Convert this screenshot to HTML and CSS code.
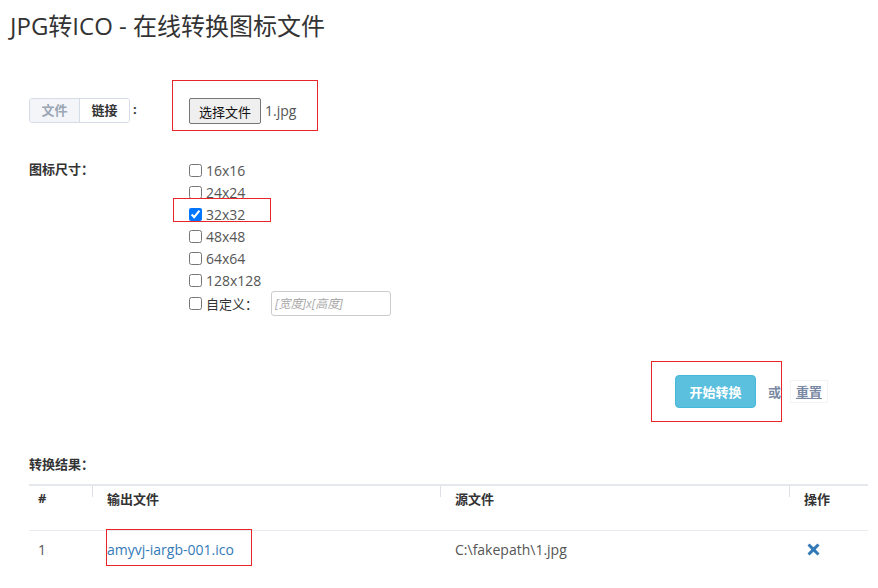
FILE: index.html
```html
<!DOCTYPE html>
<html lang="zh-CN">
  <head>
    <meta charset="UTF-8" />
    <meta name="viewport" content="width=device-width, initial-scale=1.0" />
    <title>JPG转ICO - 在线转换图标文件</title>
    <link rel="stylesheet" href="styles.css">
  </head>
  <body>
    <h1 class="title">JPG转ICO - 在线转换图标文件</h1>

    <div class="form">
      <div class="row source-row">
        <div class="row-label">
          <div class="tabs">
            <span class="tab">文件</span>
            <span class="tab active">链接</span>
          </div>
          <span class="colon">:</span>
        </div>
        <div class="mark file-box">
          <button class="file-btn">选择文件</button>
          <span class="file-name">1.jpg</span>
        </div>
      </div>

      <div class="row size-row">
        <div class="row-label"><b>图标尺寸：</b></div>
        <div class="sizes">
          <label class="size"><input type="checkbox" /> 16x16</label>
          <label class="size"><input type="checkbox" /> 24x24</label>
          <label class="size picked"><input type="checkbox" checked /> 32x32<span class="mark picked-mark"></span></label>
          <label class="size"><input type="checkbox" /> 48x48</label>
          <label class="size"><input type="checkbox" /> 64x64</label>
          <label class="size"><input type="checkbox" /> 128x128</label>
          <label class="size custom"><input type="checkbox" /> 自定义：<input type="text" class="custom-input" placeholder="[宽度]x[高度]" /></label>
        </div>
      </div>

      <div class="actions">
        <div class="go-wrap">
          <button class="go-btn">开始转换</button>
          <span class="mark go-mark"></span>
        </div>
        <span class="or">或</span>
        <a href="#" class="reset">重置</a>
      </div>
    </div>

    <div class="results">
      <b class="results-title">转换结果：</b>
      <table class="result-table">
        <thead>
          <tr>
            <th class="col-num">#</th>
            <th class="col-out">输出文件</th>
            <th class="col-src">源文件</th>
            <th class="col-op">操作</th>
          </tr>
        </thead>
        <tbody>
          <tr>
            <td class="col-num">1</td>
            <td class="col-out"><a href="#" class="out-link">amyvj-iargb-001.ico<span class="mark link-mark"></span></a></td>
            <td class="col-src">C:\fakepath\1.jpg</td>
            <td class="col-op">
              <svg class="del" width="13" height="13" viewBox="0 0 13 13">
                <path d="M2.5 0.5 L6.5 4.3 L10.5 0.5 L12.5 2.5 L8.7 6.5 L12.5 10.5 L10.5 12.5 L6.5 8.7 L2.5 12.5 L0.5 10.5 L4.3 6.5 L0.5 2.5 Z" fill="#337ab7" />
              </svg>
            </td>
          </tr>
        </tbody>
      </table>
    </div>
  </body>
</html>
```

FILE: styles.css
```css
body {
  margin: 0;
  font-family: "Open Sans", "Noto Sans CJK SC", sans-serif;
  font-size: 14px;
  color: #555;
  background: #fff;
}

.title {
  margin: 10px 0 0 10px;
  font-size: 24px;
  line-height: 32px;
  font-weight: normal;
  color: #333;
}

.form {
  padding-left: 29px;
}

.row {
  display: flex;
}

.row-label {
  width: 143px;
  flex-shrink: 0;
  display: flex;
  align-items: flex-start;
  font-size: 13px;
  color: #333;
}

/* red outlines drawn around the key controls */
.mark {
  border: 1px solid #e8262a;
}

.source-row {
  margin-top: 38px;
}

.source-row .row-label {
  padding-top: 18px;
}

.tabs {
  display: flex;
  border: 1px solid #d6dce5;
  border-radius: 3px;
  overflow: hidden;
}

.tab {
  width: 49px;
  height: 23px;
  line-height: 23px;
  text-align: center;
  font-weight: bold;
  font-size: 13px;
  color: #9ba5b5;
  background: #f3f5f8;
}

.tab.active {
  color: #333;
  background: #fff;
  border-left: 1px solid #d6dce5;
}

.colon {
  margin-left: 3px;
  line-height: 23px;
  font-weight: bold;
}

.file-box {
  width: 128px;
  height: 32px;
  padding: 17px 0 0 16px;
  display: flex;
  align-items: flex-start;
}

.file-btn {
  height: 26px;
  padding: 0 9px;
  font-family: "Noto Sans CJK SC", sans-serif;
  font-size: 13px;
  color: #111;
  background: #efefef;
  border: 1px solid #767676;
  border-radius: 2px;
}

.file-name {
  margin-left: 4px;
  line-height: 26px;
  color: #555;
}

.size-row {
  margin-top: 28px;
}

.size-row .row-label {
  width: 160px;
  padding-top: 1px;
  line-height: 18px;
}

.sizes {
  display: flex;
  flex-direction: column;
}

.size {
  position: relative;
  height: 22px;
  display: flex;
  align-items: center;
  color: #555;
}

.size input[type="checkbox"] {
  width: 13px;
  height: 13px;
  margin: 0 4px 0 0;
}

.picked-mark {
  position: absolute;
  left: -16px;
  top: -5px;
  width: 96px;
  height: 22px;
}

.custom {
  margin-top: 1px;
  height: 22px;
  font-size: 13px;
  color: #333;
}

.custom-input {
  width: 120px;
  height: 25px;
  margin-left: 13px;
  padding: 0 3px;
  box-sizing: border-box;
  border: 1px solid #ccc;
  border-radius: 3px;
  font-family: "Open Sans", "Noto Sans CJK SC", sans-serif;
  font-size: 12px;
}

.custom-input::placeholder {
  color: #aaa;
  font-style: italic;
}

.actions {
  display: flex;
  justify-content: flex-end;
  align-items: center;
  margin-top: 61px;
  padding-right: 50px;
}

.go-wrap {
  position: relative;
}

.go-btn {
  width: 81px;
  height: 33px;
  display: block;
  font-family: "Noto Sans CJK SC", sans-serif;
  font-size: 13px;
  font-weight: bold;
  color: #fff;
  background: #5bc0de;
  border: 1px solid #46b8da;
  border-radius: 4px;
}

.go-mark {
  position: absolute;
  left: -24px;
  top: -14px;
  width: 129px;
  height: 59px;
}

.or {
  margin-left: 12px;
  font-size: 13px;
  font-weight: bold;
  color: #7a89a3;
}

.reset {
  position: relative;
  margin-left: 9px;
  padding: 1px 5px;
  font-size: 13px;
  font-weight: bold;
  color: #7a89a3;
  background: #fff;
  border: 1px solid #f4f4f4;
}

.results {
  margin-top: 47px;
  padding: 0 10px 0 29px;
}

.results-title {
  display: block;
  font-size: 13px;
  color: #333;
  line-height: 18px;
}

.result-table {
  width: 100%;
  margin-top: 11px;
  border-collapse: collapse;
  border-top: 2px solid #e4e7ec;
}

.result-table th {
  position: relative;
  height: 41px;
  padding: 3px 15px 0;
  vertical-align: top;
  text-align: left;
  font-size: 13px;
  color: #333;
  border-bottom: 1px solid #e8ebef;
}

.result-table th + th::before {
  content: "";
  position: absolute;
  left: 0;
  top: 0;
  width: 1px;
  height: 11px;
  background: #dde1e6;
}

.result-table td {
  height: 37px;
  padding: 0 15px;
  color: #555;
}

.result-table .col-num {
  width: 39px;
  padding-left: 9px;
}

.col-out {
  width: 318px;
}

.col-src {
  width: 319px;
}

.out-link {
  position: relative;
  color: #337ab7;
  text-decoration: none;
}

.link-mark {
  position: absolute;
  left: -1px;
  top: -11px;
  width: 144px;
  height: 35px;
}

.del {
  display: block;
  margin-left: 3px;
}
```
